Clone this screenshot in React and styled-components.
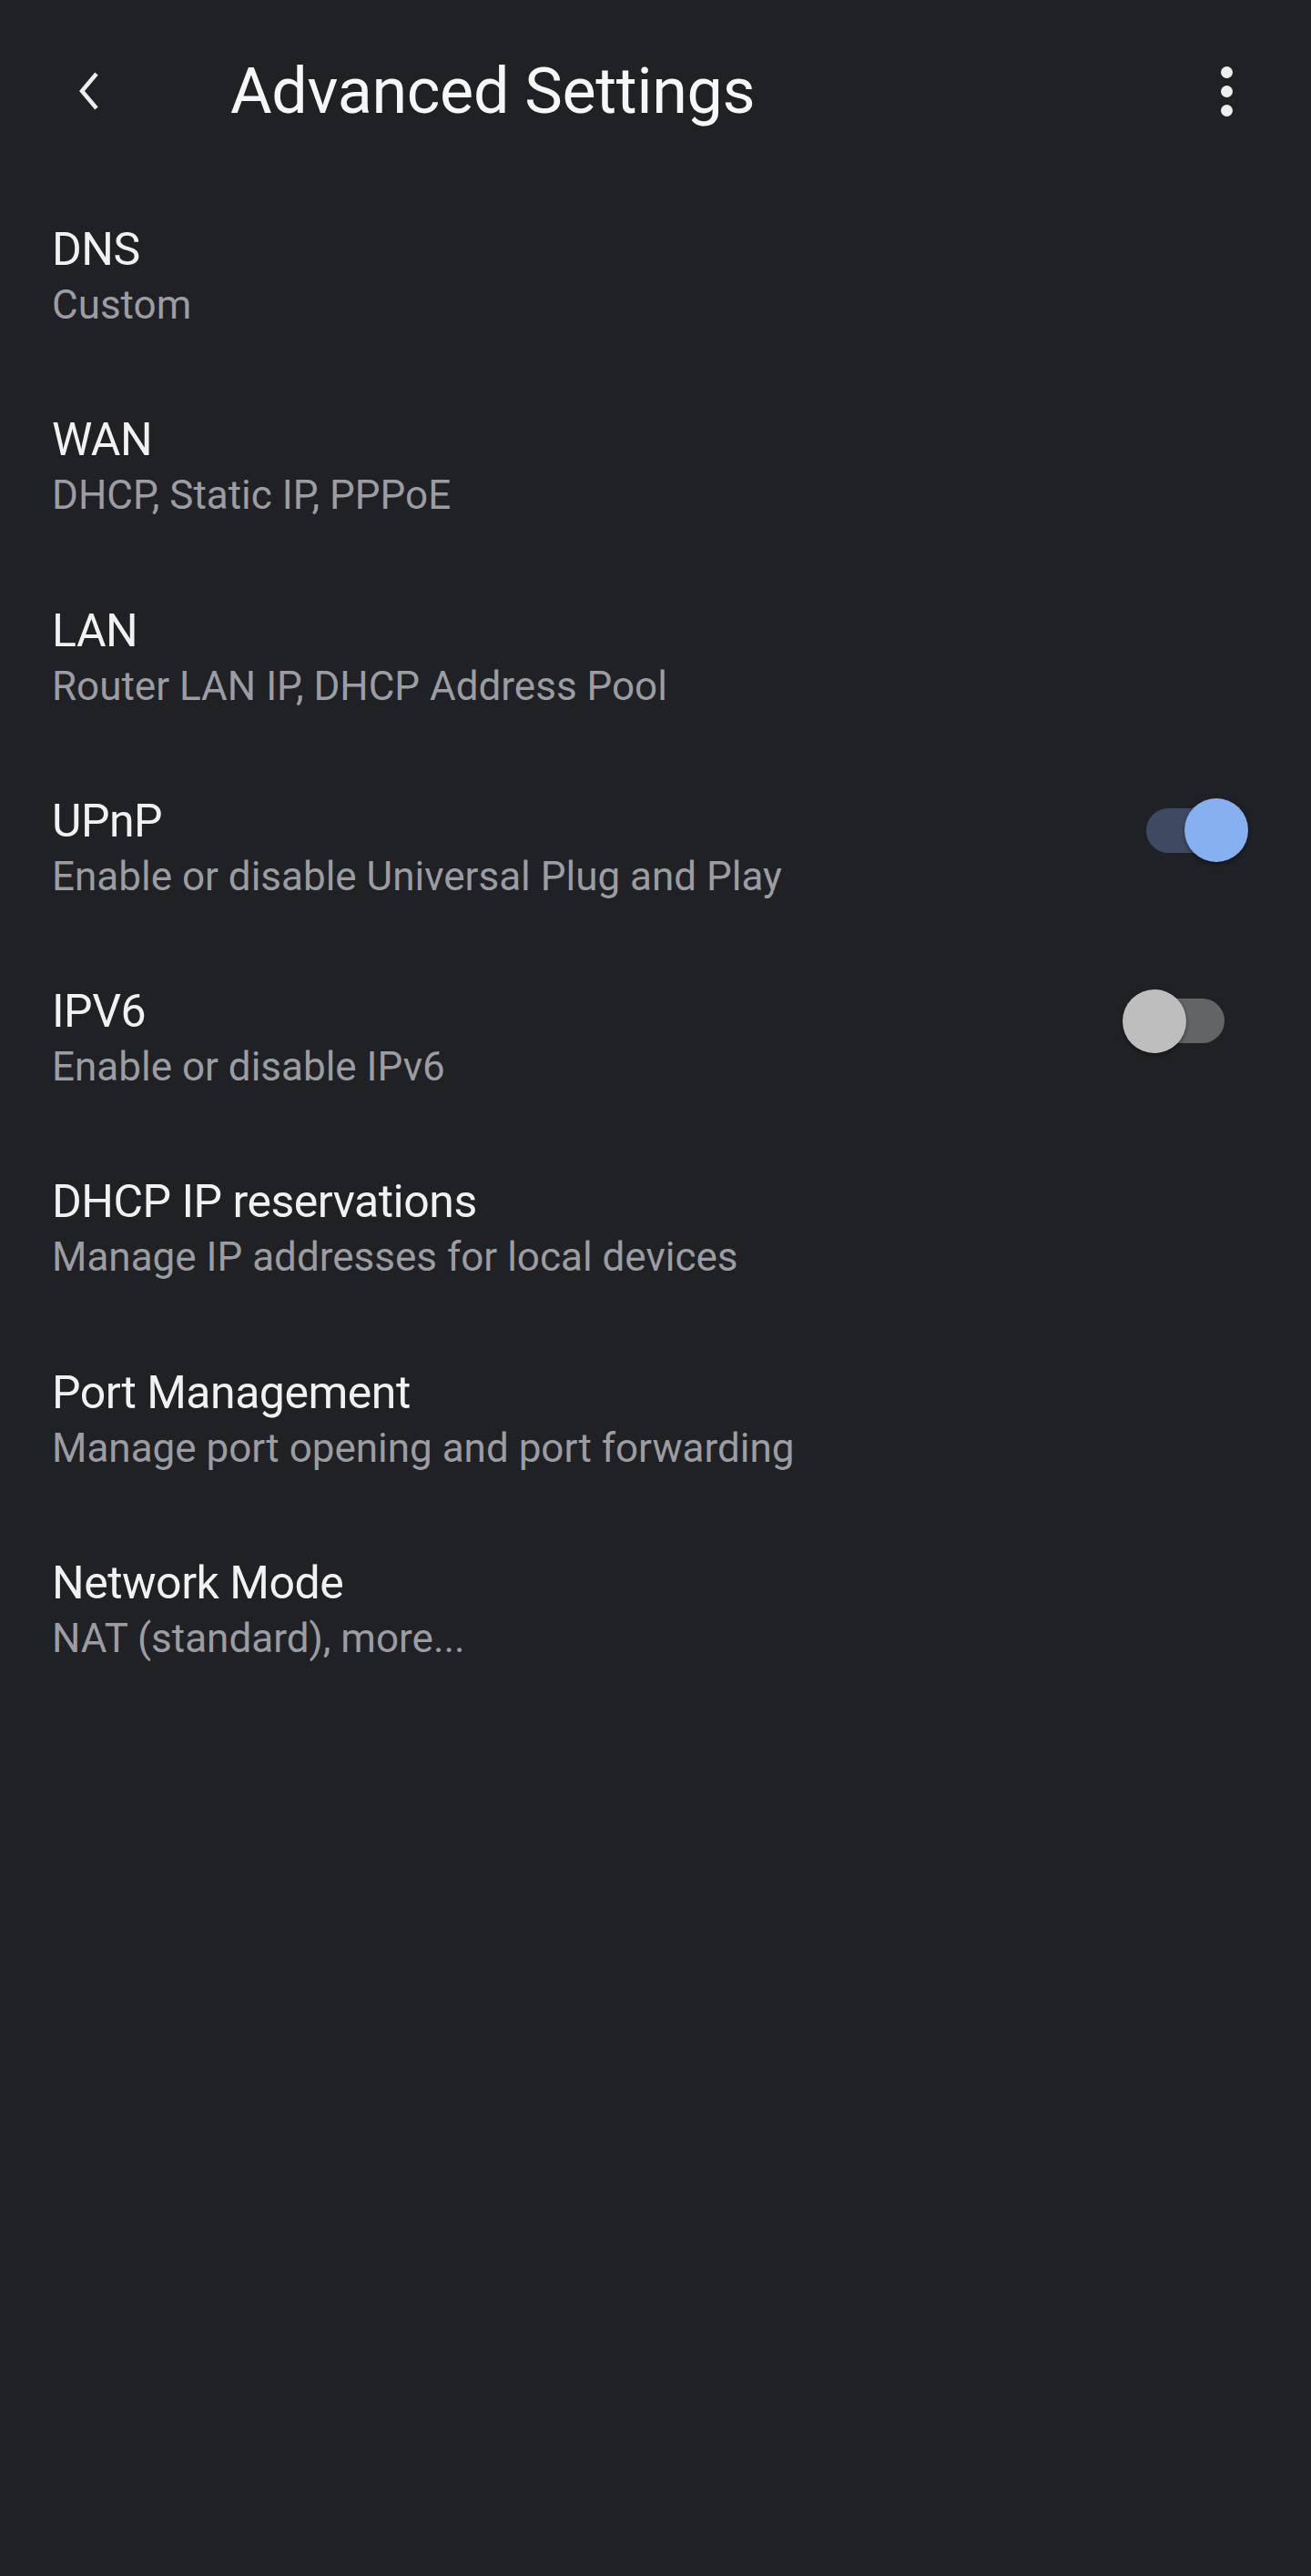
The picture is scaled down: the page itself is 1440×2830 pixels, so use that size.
import React from "react";
import styled, { createGlobalStyle } from "styled-components";

const Global = createGlobalStyle`
  html, body { margin: 0; padding: 0; background: #202125; }
  body { font-family: Roboto, "Noto Sans", sans-serif; }
  #root { min-height: 2830px; background: #202125; }
`;

const Screen = styled.div`
  width: 1440px;
  min-height: 2830px;
  background: #202125;
  color: #f1f1f3;
  display: flex;
  flex-direction: column;
`;

const Header = styled.header`
  height: 200px;
  display: flex;
  align-items: center;
  padding: 0 79px 0 80px;
  box-sizing: border-box;
`;

const IconButton = styled.button`
  background: none;
  border: 0;
  padding: 0;
  width: ${(p) => p.$w}px;
  height: 60px;
  display: flex;
  align-items: center;
  justify-content: center;
  color: #eeeef0;
  cursor: pointer;
`;

const Title = styled.h1`
  flex: 1;
  margin: 0 0 0 139px;
  font-size: 70px;
  line-height: 84px;
  font-weight: 400;
  letter-spacing: -0.3px;
  color: #f7f7f9;
`;

const Dots = styled.div`
  display: flex;
  flex-direction: column;
  gap: 8px;
`;

const Dot = styled.span`
  width: 13px;
  height: 13px;
  border-radius: 50%;
  background: #eeeef0;
`;

const List = styled.div`
  display: flex;
  flex-direction: column;
`;

const Row = styled.div`
  height: 209.3px;
  box-sizing: border-box;
  padding: 44px 0 0 57px;
  display: flex;
  align-items: flex-start;
`;

const Texts = styled.div`
  flex: 1;
  display: flex;
  flex-direction: column;
`;

const RowTitle = styled.div`
  font-size: 50px;
  line-height: 60px;
  letter-spacing: -0.5px;
  color: #f1f1f3;
`;

const RowSub = styled.div`
  font-size: 44px;
  line-height: 62px;
  letter-spacing: 0;
  color: #9b9da2;
`;

const SwitchWrap = styled.div`
  position: relative;
  width: 101px;
  height: 49px;
  margin-top: ${(p) => p.$top}px;
  margin-right: ${(p) => p.$right}px;
  border-radius: 25px;
  background: ${(p) => (p.$on ? "#3e4a62" : "#636466")};
`;

const Thumb = styled.span`
  position: absolute;
  top: -10.5px;
  left: ${(p) => (p.$on ? 42 : -11)}px;
  width: 70px;
  height: 70px;
  border-radius: 50%;
  background: ${(p) => (p.$on ? "#87b0f1" : "#bebebe")};
  box-shadow: 0 2px 4px rgba(0, 0, 0, 0.45);
`;

function Switch({ on, top, right }) {
  return (
    <SwitchWrap $on={on} $top={top} $right={right}>
      <Thumb $on={on} />
    </SwitchWrap>
  );
}

const items = [
  { t: "DNS", s: "Custom" },
  { t: "WAN", s: "DHCP, Static IP, PPPoE" },
  { t: "LAN", s: "Router LAN IP, DHCP Address Pool" },
  { t: "UPnP", s: "Enable or disable Universal Plug and Play", sw: { on: true, top: 16, right: 80 } },
  { t: "IPV6", s: "Enable or disable IPv6", sw: { on: false, top: 16, right: 95 } },
  { t: "DHCP IP reservations", s: "Manage IP addresses for local devices" },
  { t: "Port Management", s: "Manage port opening and port forwarding" },
  { t: "Network Mode", s: "NAT (standard), more..." },
];

export default function App() {
  return (
    <Screen>
      <Global />
      <Header>
        <IconButton $w={34} aria-label="Back">
          <svg width="26" height="44" viewBox="0 0 26 44">
            <polyline points="22,3 6,22 22,41" fill="none" stroke="#eeeef0" strokeWidth="4.5" strokeLinejoin="miter" />
          </svg>
        </IconButton>
        <Title>Advanced Settings</Title>
        <IconButton $w={28} aria-label="More">
          <Dots>
            <Dot />
            <Dot />
            <Dot />
          </Dots>
        </IconButton>
      </Header>
      <List>
        {items.map((it) => (
          <Row key={it.t}>
            <Texts>
              <RowTitle>{it.t}</RowTitle>
              <RowSub>{it.s}</RowSub>
            </Texts>
            {it.sw && <Switch {...it.sw} />}
          </Row>
        ))}
      </List>
    </Screen>
  );
}
